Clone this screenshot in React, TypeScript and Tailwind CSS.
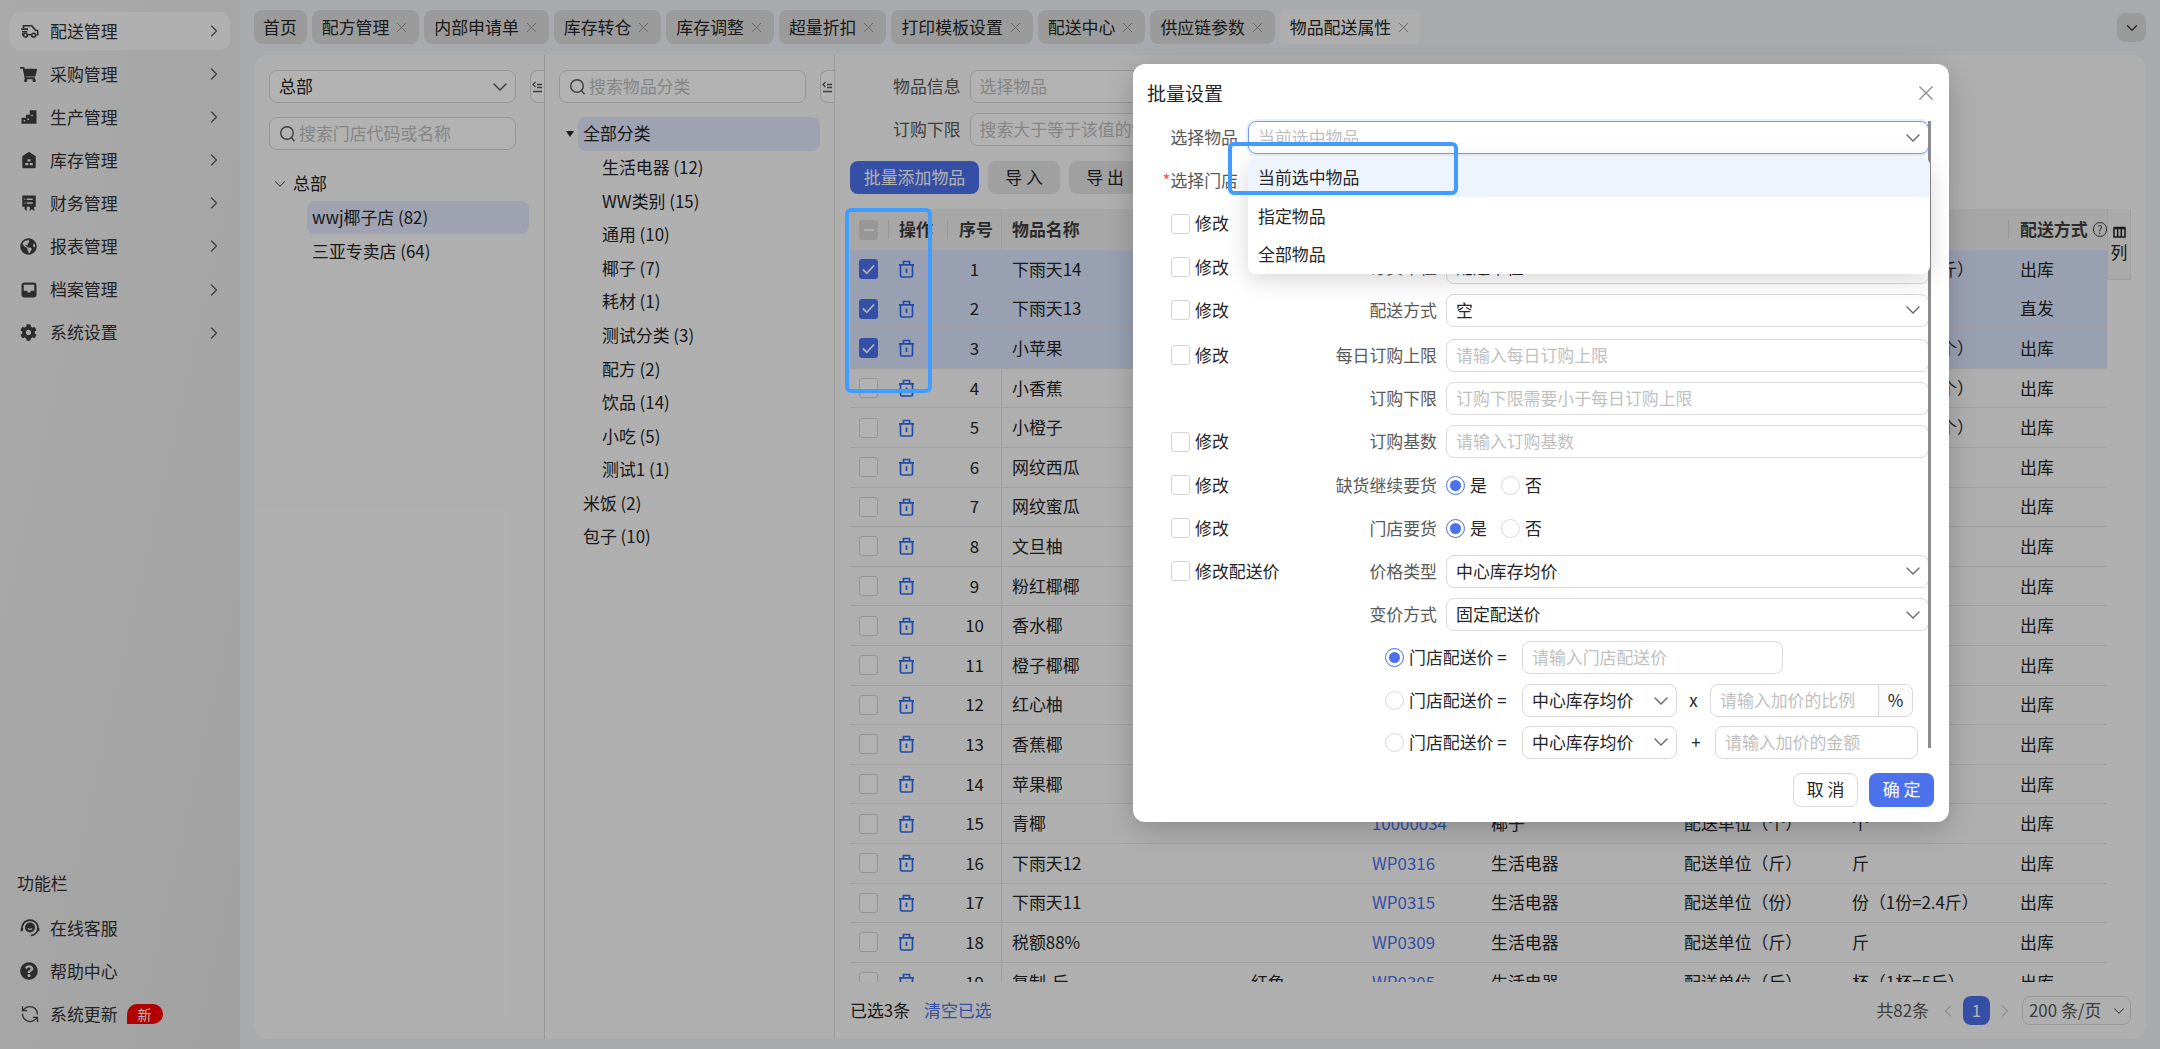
import { ChevronDown, ChevronRight, ChevronLeft, RefreshCcw } from "lucide-react";
import { FaCog, FaGlobeAmericas, FaQuestionCircle, FaShoppingCart } from "react-icons/fa";
import type { ReactNode } from "react";

const TruckIcon = () => (
  <svg width="19" height="18" viewBox="0 0 24 24" fill="none" stroke="currentColor" strokeWidth="2.2">
    <path d="M4 8V5h11l5 6h1.500a1.500 1.500 0 0 1 1.500 1.500V17h-2M15 17H9M4 17H3v-2" />
    <path d="M1 9.500h9M2 13h7" />
    <circle cx="6.500" cy="17.500" r="2.500" />
    <circle cx="17.500" cy="17.500" r="2.500" />
  </svg>
);

const StairsIcon = () => (
  <svg width="18" height="18" viewBox="0 0 24 24" fill="currentColor">
    <path fillRule="evenodd" d="M2 21v-7a1 1 0 0 1 1-1h5V9h5V3h8a1 1 0 0 1 1 1v17H2zm3-5v2h2v-2H5zm5-2v2h2v-2h-2zm5-5v2h2V9h-2z" />
  </svg>
);

const StoreIcon = () => (
  <svg width="18" height="18" viewBox="0 0 24 24" fill="currentColor">
    <path fillRule="evenodd" d="M12 1l9 6v14a2 2 0 0 1-2 2H5a2 2 0 0 1-2-2V7l9-6zm-2 10v3h4v-3h-4zm-3 5v3h4v-3H7zm6 0v3h4v-3h-4z" />
  </svg>
);

const ReceiptIcon = () => (
  <svg width="18" height="18" viewBox="0 0 24 24" fill="currentColor">
    <path fillRule="evenodd" d="M3 2h18v15h-2v6l-3-3-3 3v-6H9v6l-3-3V17H3V2zm6 4v2h8V6H9zm0 5v2h8v-2H9zM6 6v2h1V6H6zm0 5v2h1v-2H6z" />
  </svg>
);

const InboxIcon = () => (
  <svg width="18" height="18" viewBox="0 0 24 24" fill="currentColor">
    <path fillRule="evenodd" d="M6 2h12a4 4 0 0 1 4 4v12a4 4 0 0 1-4 4H6a4 4 0 0 1-4-4V6a4 4 0 0 1 4-4zm-1 3v8h4.500a2.500 2.500 0 0 0 5 0H19V5H5z" />
  </svg>
);

const HeadsetIcon = () => (
  <svg width="20" height="20" viewBox="0 0 24 24" fill="none" stroke="currentColor" strokeWidth="2">
    <path d="M3 15a9.500 9.500 0 1 1 18 0" />
    <path d="M21 15c-1 3-3.500 5.500-8 6" />
    <circle cx="12" cy="11.500" r="6" fill="currentColor" stroke="none" />
    <path d="M9.500 12.500c1.500 1.500 3.500 1.500 5 0" stroke="#ececec" strokeWidth="1.500" />
    <path d="M2 12v4M22 12v4" strokeWidth="2.500" />
  </svg>
);

const TrashIcon = () => (
  <svg width="17" height="18" viewBox="0 0 17 18" fill="none" stroke="#2f6bf0" strokeWidth="1.700">
    <path d="M1 4.800h15M5.500 4.500V1.500h6v3" />
    <path d="M2.500 4.800v10.700a1.500 1.500 0 0 0 1.500 1.500h9a1.500 1.500 0 0 0 1.500-1.500V4.800M8.500 8.500v4.500" />
  </svg>
);

const SmallX = ({ size = 11 }: { size?: number }) => (
  <svg width={size} height={size} viewBox="0 0 11 11" fill="none" stroke="currentColor" strokeWidth="0.900">
    <path d="M1 1l9 9M10 1l-9 9" />
  </svg>
);

const SearchIcon = () => (
  <svg width="17" height="18" viewBox="0 0 17 18" fill="none" stroke="#595959" strokeWidth="1.400" className="shrink-0">
    <circle cx="8" cy="8" r="6.300" />
    <path d="M12.500 12.800l3 3.400" />
  </svg>
);

const CollapseHandle = () => (
  <div className="flex h-[33px] w-[14px] items-center justify-center rounded-l-[8px] border border-r-0 border-[#d9d9d9] bg-white">
    <svg width="11" height="12" viewBox="0 0 11 12" fill="none" stroke="#595959" strokeWidth="1.300">
      <path d="M3.500 1L1 3.500 3.500 6M5 3.500h5M5 6.500h5M1 10.500h9" />
    </svg>
  </div>
);

const Check = ({ state = "off" }: { state?: "off" | "on" | "mixed" }) => {
  if (state === "on") {
    return (
      <span className="flex h-[20px] w-[19px] shrink-0 items-center justify-center rounded-[3px] bg-[#4b72ec]">
        <svg width="13" height="11" viewBox="0 0 13 11" fill="none" stroke="white" strokeWidth="1.800">
          <path d="M1 5.500l3.800 3.800L12 1.500" />
        </svg>
      </span>
    );
  }
  if (state === "mixed") {
    return (
      <span className="flex h-[20px] w-[19px] shrink-0 items-center justify-center rounded-[3px] bg-[#d9d9d9]">
        <span className="h-[2px] w-[10px] bg-white" />
      </span>
    );
  }
  return <span className="h-[20px] w-[19px] shrink-0 rounded-[3px] border-[1.5px] border-[#d4d4d4] bg-white" />;
};

const Radio = ({ on = false }: { on?: boolean }) => (
  <span
    className={
      on
        ? "flex h-[19px] w-[19px] shrink-0 items-center justify-center rounded-full border border-[#4b72ec] bg-white"
        : "h-[19px] w-[19px] shrink-0 rounded-full border border-[#d9d9d9] bg-white"
    }
  >
    {on && <span className="h-[11px] w-[11px] rounded-full bg-[#4b72ec]" />}
  </span>
);

const InputBox = ({ placeholder, className = "" }: { placeholder: string; className?: string }) => (
  <div className={"flex h-[33px] items-center overflow-hidden whitespace-nowrap rounded-[8px] border border-[#d9d9d9] px-[9px] text-[#bfbfbf] " + className}>
    {placeholder}
  </div>
);

const SelectBox = ({ value, className = "" }: { value: string; className?: string }) => (
  <div className={"flex h-[33px] items-center justify-between rounded-[8px] border border-[#d9d9d9] pl-[9px] pr-[3px] text-[#262626] " + className}>
    <span className="whitespace-nowrap">{value}</span>
    <ChevronDown size={24} strokeWidth={1.4} className="shrink-0 text-[#666]" />
  </div>
);

const FormRow = ({ check, label, className = "", children }: { check?: string; label?: string; className?: string; children: ReactNode }) => (
  <div className={"flex h-[33px] items-center " + className}>
    <div className="flex w-[140px] items-center gap-[5px] text-[#262626]">
      {check && <Check />}
      {check && <span className="whitespace-nowrap">{check}</span>}
    </div>
    <div className="flex-1 whitespace-nowrap pr-[9px] text-right text-[#595959]">{label}</div>
    <div className="w-[483px]">{children}</div>
  </div>
);

const YesNo = () => (
  <div className="flex items-center text-[#262626]">
    <Radio on />
    <span className="ml-[5px] w-[31px]">是</span>
    <Radio />
    <span className="ml-[5px]">否</span>
  </div>
);

const menus = [
  { name: "配送管理", icon: <TruckIcon /> },
  { name: "采购管理", icon: <FaShoppingCart size={17} /> },
  { name: "生产管理", icon: <StairsIcon /> },
  { name: "库存管理", icon: <StoreIcon /> },
  { name: "财务管理", icon: <ReceiptIcon /> },
  { name: "报表管理", icon: <FaGlobeAmericas size={17} /> },
  { name: "档案管理", icon: <InboxIcon /> },
  { name: "系统设置", icon: <FaCog size={17} /> },
];

const tabs = ["配方管理", "内部申请单", "库存转仓", "库存调整", "超量折扣", "打印模板设置", "配送中心", "供应链参数"];

const categories = ["生活电器 (12)", "WW类别 (15)", "通用 (10)", "椰子 (7)", "耗材 (1)", "测试分类 (3)", "配方 (2)", "饮品 (14)", "小吃 (5)", "测试1 (1)"];

const rows = [
  { name: "下雨天14", code: "WP0330", cat: "生活电器", unit: "配送单位（斤）", order: "箱（1箱=10斤）", way: "出库" },
  { name: "下雨天13", code: "WP0329", cat: "生活电器", unit: "配送单位（斤）", order: "斤", way: "直发" },
  { name: "小苹果", code: "WP0328", cat: "椰子", unit: "配送单位（个）", order: "箱（1箱=10个）", way: "出库" },
  { name: "小香蕉", code: "WP0327", cat: "椰子", unit: "配送单位（个）", order: "箱（1箱=10个）", way: "出库" },
  { name: "小橙子", code: "WP0326", cat: "椰子", unit: "配送单位（个）", order: "箱（1箱=10个）", way: "出库" },
  { name: "网纹西瓜", code: "10000040", cat: "椰子", unit: "配送单位（个）", order: "个", way: "出库" },
  { name: "网纹蜜瓜", code: "10000039", cat: "椰子", unit: "配送单位（个）", order: "个", way: "出库" },
  { name: "文旦柚", code: "10000038", cat: "椰子", unit: "配送单位（个）", order: "个", way: "出库" },
  { name: "粉红椰椰", code: "10000037", cat: "椰子", unit: "配送单位（个）", order: "个", way: "出库" },
  { name: "香水椰", code: "10000036", cat: "椰子", unit: "配送单位（个）", order: "个", way: "出库" },
  { name: "橙子椰椰", code: "10000035", cat: "椰子", unit: "配送单位（个）", order: "个", way: "出库" },
  { name: "红心柚", code: "10000033", cat: "椰子", unit: "配送单位（个）", order: "个", way: "出库" },
  { name: "香蕉椰", code: "10000032", cat: "椰子", unit: "配送单位（个）", order: "个", way: "出库" },
  { name: "苹果椰", code: "10000031", cat: "椰子", unit: "配送单位（个）", order: "个", way: "出库" },
  { name: "青椰", code: "10000034", cat: "椰子", unit: "配送单位（个）", order: "个", way: "出库" },
  { name: "下雨天12", code: "WP0316", cat: "生活电器", unit: "配送单位（斤）", order: "斤", way: "出库" },
  { name: "下雨天11", code: "WP0315", cat: "生活电器", unit: "配送单位（份）", order: "份（1份=2.4斤）", way: "出库" },
  { name: "税额88%", code: "WP0309", cat: "生活电器", unit: "配送单位（斤）", order: "斤", way: "出库" },
  { name: "复制-斤", color: "红色", code: "WP0305", cat: "生活电器", unit: "配送单位（斤）", order: "杯（1杯=5斤）", way: "出库" },
];

const gridCols = "grid grid-cols-[38px_59px_54px_239px_120px_120px_192px_168px_168px_99px]";

export default function App() {
  return (
    <div className="relative flex h-[1049px] w-[2160px] overflow-hidden bg-[#f1f4f8] font-['Noto_Sans_CJK_SC','Liberation_Sans',sans-serif] text-[16.9px] leading-none text-[#262626]">
      {/* 左侧菜单 */}
      <aside className="flex w-[240px] shrink-0 flex-col justify-between bg-linear-to-br from-[#f4f4f4] to-[#e8e8e8] pb-[25px] pt-[12px]">
        <nav className="flex flex-col gap-[5.1px] px-[10px]">
          {menus.map((m, i) => (
            <div key={m.name} className={(i === 0 ? "bg-[#fcfcfc] " : "") + "flex h-[38px] items-center rounded-[10px] pl-[10px] pr-[6px] text-[#333]"}>
              <span className="flex w-[30px] text-[#404040]">{m.icon}</span>
              <span className="flex-1">{m.name}</span>
              <ChevronRight size={20} strokeWidth={1.4} className="text-[#555]" />
            </div>
          ))}
        </nav>
        <div className="flex flex-col text-[#333]">
          <div className="mb-[26px] pl-[17px]">功能栏</div>
          <div className="flex flex-col gap-[24px] pl-[20px]">
            <div className="flex items-center">
              <span className="w-[30px] text-[#404040]"><HeadsetIcon /></span>
              在线客服
            </div>
            <div className="flex items-center">
              <span className="w-[30px] text-[#404040]"><FaQuestionCircle size={18} /></span>
              帮助中心
            </div>
            <div className="flex items-center">
              <span className="w-[30px] text-[#404040]"><RefreshCcw size={20} strokeWidth={1.5} /></span>
              系统更新
              <span className="ml-[9px] flex h-[20px] w-[36px] items-center justify-center rounded-t-[10px] rounded-br-[10px] bg-[#ff0000] text-[14px] text-white">新</span>
            </div>
          </div>
        </div>
      </aside>

      <main className="flex min-w-0 flex-1 flex-col">
        {/* 页签 */}
        <div className="flex h-[55px] shrink-0 items-start gap-[5px] pl-[14px] pr-[14px] pt-[10px]">
          <div className="flex h-[34px] items-center rounded-[8px] bg-[#dfdfdf] pl-[9px] pr-[10px]">首页</div>
          {tabs.map((t) => (
            <div key={t} className="flex h-[34px] items-center gap-[7px] rounded-[8px] bg-[#dfdfdf] pl-[10px] pr-[12px]">
              {t}
              <span className="text-[#8c8c8c]"><SmallX /></span>
            </div>
          ))}
          <div className="flex h-[34px] items-center gap-[7px] rounded-[8px] bg-[#fafafa] pl-[10px] pr-[12px]">
            物品配送属性
            <span className="text-[#8c8c8c]"><SmallX /></span>
          </div>
          <div className="ml-auto mt-[3px] flex h-[29px] w-[29px] items-center justify-center rounded-[8px] bg-[#dfdfdf]">
            <ChevronDown size={18} strokeWidth={2} className="text-[#404040]" />
          </div>
        </div>

        {/* 内容面板 */}
        <div className="mx-[14px] mb-[10px] flex min-h-0 flex-1 overflow-hidden rounded-[14px] bg-[#fbfbfb]">
          {/* 门店树 */}
          <section className="w-[291px] shrink-0 border-r border-[#dcdcdc] pl-[15px] pt-[15px]">
            <div className="flex items-center justify-between">
              <div className="flex h-[33px] w-[247px] items-center justify-between rounded-[8px] border border-[#d9d9d9] bg-white pl-[9px] pr-[3px]">
                总部
                <ChevronDown size={24} strokeWidth={1.4} className="text-[#555]" />
              </div>
              <CollapseHandle />
            </div>
            <div className="mt-[14px] flex h-[33px] w-[247px] items-center gap-[3px] rounded-[8px] border border-[#d9d9d9] bg-white pl-[9px] text-[#bfbfbf]">
              <SearchIcon />
              搜索门店代码或名称
            </div>
            <div className="mt-[17px] pr-[15px]">
              <div className="flex h-[33.6px] items-center">
                <span className="flex w-[24px] pl-[2px]"><ChevronDown size={18} strokeWidth={1.4} className="text-[#555]" /></span>
                总部
              </div>
              <div className="ml-[38px] flex h-[33.6px] items-center rounded-[8px] bg-[#e4e9fe] pl-[5px]">wwj椰子店 (82)</div>
              <div className="ml-[38px] flex h-[33.6px] items-center pl-[5px]">三亚专卖店 (64)</div>
            </div>
          </section>

          {/* 分类树 */}
          <section className="w-[290px] shrink-0 border-r border-[#dcdcdc] pl-[14px] pt-[15px]">
            <div className="flex items-center justify-between">
              <div className="flex h-[33px] w-[247px] items-center gap-[3px] rounded-[8px] border border-[#d9d9d9] bg-white pl-[9px] text-[#bfbfbf]">
                <SearchIcon />
                搜索物品分类
              </div>
              <CollapseHandle />
            </div>
            <div className="mt-[14px] pr-[14px]">
              <div className="flex h-[33.6px] items-center">
                <span className="flex w-[19px] justify-center pl-[2px]">
                  <span className="h-0 w-0 border-x-[4px] border-t-[6px] border-x-transparent border-t-[#262626]" />
                </span>
                <span className="flex h-[33.6px] flex-1 items-center rounded-[8px] bg-[#e4e9fe] pl-[5px]">全部分类</span>
              </div>
              {categories.map((c) => (
                <div key={c} className="flex h-[33.6px] items-center pl-[43px]">{c}</div>
              ))}
              <div className="flex h-[33.6px] items-center pl-[24px]">米饭 (2)</div>
              <div className="flex h-[33.6px] items-center pl-[24px]">包子 (10)</div>
            </div>
          </section>

          {/* 物品列表 */}
          <section className="flex min-w-0 flex-1 flex-col px-[15px] pt-[15px]">
            <div className="flex h-[33px] items-center gap-[9px] pl-[43px]">
              <span className="text-[#595959]">物品信息</span>
              <InputBox placeholder="选择物品" className="w-[300px] bg-white" />
            </div>
            <div className="mt-[10px] flex h-[33px] items-center gap-[9px] pl-[43px]">
              <span className="text-[#595959]">订购下限</span>
              <InputBox placeholder="搜索大于等于该值的物品" className="w-[300px] bg-white" />
            </div>
            <div className="mt-[15px] flex h-[33px] gap-[9px]">
              <div className="flex w-[129px] items-center justify-center rounded-[8px] bg-[#4b72ec] text-white">批量添加物品</div>
              <div className="flex w-[72px] items-center justify-center rounded-[8px] bg-[#e6e6e6]">导 入</div>
              <div className="flex w-[72px] items-center justify-center rounded-[8px] bg-[#e6e6e6]">导 出</div>
            </div>
            <div className="mt-[15px] flex min-h-0 flex-1 overflow-hidden">
              <div className="w-[1257px] shrink-0">
                <div className={gridCols + " h-[41px] items-center bg-[#efefef] font-bold text-[#404040]"}>
                  <div className="flex items-center pl-[9px]"><Check state="mixed" /></div>
                  <div className="flex h-[19px] items-center border-l border-[#d9d9d9] pl-[10px]">操作</div>
                  <div className="flex h-[19px] items-center border-l border-[#d9d9d9] pl-[11px]">序号</div>
                  <div className="flex h-full items-center border-l border-[#e4e4e4] pl-[10px]">物品名称</div>
                  <div /><div /><div /><div /><div />
                  <div className="flex h-[19px] items-center whitespace-nowrap border-l border-[#d9d9d9] pl-[11px]">
                    配送方式
                    <span className="ml-[5px] flex h-[15px] w-[15px] items-center justify-center rounded-full border border-[#404040] text-[11px] font-normal">?</span>
                  </div>
                </div>
                {rows.map((r, i) => (
                  <div key={r.name} className={(i < 3 ? "bg-[#dce6ff] " : "") + gridCols + " h-[39.6px] items-center border-b border-[#e6e6e6]"}>
                    <div className="flex items-center pl-[9px]"><Check state={i < 3 ? "on" : "off"} /></div>
                    <div className="flex items-center pl-[10px]"><TrashIcon /></div>
                    <div className="pl-[1px] text-center">{i + 1}</div>
                    <div className="flex h-full items-center border-l border-[#e6e6e6] pl-[10px]">{r.name}</div>
                    <div className="pl-[11px]">{r.color}</div>
                    <div className="pl-[12px] text-[#4b72ec]">{r.code}</div>
                    <div className="pl-[11px]">{r.cat}</div>
                    <div className="pl-[12px]">{r.unit}</div>
                    <div className="whitespace-nowrap pl-[12px]">{r.order}</div>
                    <div className="pl-[12px]">{r.way}</div>
                  </div>
                ))}
              </div>
              <div className="flex h-[71px] flex-1 flex-col items-center border-x border-b border-[#e6e6e6] bg-[#f4f4f4] pt-[17px]">
                <svg width="13" height="12" viewBox="0 0 13 12" fill="none" stroke="#262626" strokeWidth="1.600">
                  <path d="M1 2h11v9H1zM4.700 2v9M8.300 2v9" />
                  <path d="M1 2h11" strokeWidth="2.500" />
                </svg>
                <span className="mt-[6px]">列</span>
              </div>
            </div>
            <div className="flex h-[57px] shrink-0 items-center">
              <span>已选3条</span>
              <span className="ml-[14px] text-[#4b72ec]">清空已选</span>
              <div className="ml-auto flex items-center text-[#595959]">
                <span>共82条</span>
                <ChevronLeft size={20} strokeWidth={1} className="ml-[9px] text-[#999]" />
                <span className="ml-[5px] flex h-[29px] w-[27px] items-center justify-center rounded-[8px] bg-[#4b72ec] text-white">1</span>
                <ChevronRight size={20} strokeWidth={1} className="ml-[5px] text-[#999]" />
                <span className="ml-[7px] flex h-[29px] w-[109px] items-center justify-between rounded-[8px] border border-[#d9d9d9] pl-[6px] pr-[2px]">
                  200 条/页
                  <ChevronDown size={18} strokeWidth={1.4} />
                </span>
              </div>
            </div>
          </section>
        </div>
      </main>

      {/* 遮罩 */}
      <div className="absolute inset-0 bg-black/30" />

      {/* 批量设置弹窗 */}
      <div className="absolute left-[1133px] top-[64px] flex h-[758px] w-[816px] flex-col rounded-[12px] bg-white pl-[38px] pr-[18px] shadow-[0_8px_28px_rgba(0,0,0,0.2)]">
        <div className="flex h-[57px] shrink-0 items-center justify-between pr-[0px]">
          <span className="-ml-[24px] text-[19px] text-[#262626]">批量设置</span>
          <span className="-mr-[3px] text-[#8c8c8c]"><SmallX size={16} /></span>
        </div>

        <div className="flex flex-col gap-[10.2px] pr-[2px]">
          <div className="flex h-[33px] items-center gap-[10px]">
            <span className="flex w-[67px] shrink-0 justify-end whitespace-nowrap text-[#595959]">选择物品</span>
            <div className="flex h-[33px] flex-1 items-center justify-between rounded-[8px] border border-[#7b9af0] pl-[9px] pr-[3px] text-[#bfbfbf] shadow-[0_0_0_2px_rgba(75,114,236,0.12)]">
              当前选中物品
              <ChevronDown size={24} strokeWidth={1.4} className="text-[#666]" />
            </div>
          </div>
          <div className="flex h-[33px] items-center gap-[10px]">
            <span className="flex w-[67px] shrink-0 justify-end whitespace-nowrap text-[#595959]"><span className="text-[#ff4d4f]">*</span>选择门店</span>
            <InputBox placeholder="请选择门店" className="flex-1" />
          </div>
          <FormRow check="修改" label="物品状态"><SelectBox value="空" /></FormRow>
          <FormRow check="修改" label="订货单位"><SelectBox value="配送单位" /></FormRow>
          <FormRow check="修改" label="配送方式"><SelectBox value="空" /></FormRow>
          <FormRow check="修改" label="每日订购上限" className="mt-[2px]"><InputBox placeholder="请输入每日订购上限" /></FormRow>
          <FormRow label="订购下限"><InputBox placeholder="订购下限需要小于每日订购上限" /></FormRow>
          <FormRow check="修改" label="订购基数"><InputBox placeholder="请输入订购基数" /></FormRow>
          <FormRow check="修改" label="缺货继续要货"><YesNo /></FormRow>
          <FormRow check="修改" label="门店要货"><YesNo /></FormRow>
          <FormRow check="修改配送价" label="价格类型"><SelectBox value="中心库存均价" /></FormRow>
          <FormRow label="变价方式"><SelectBox value="固定配送价" /></FormRow>

          <div className="flex h-[33px] items-center pl-[214px]">
            <Radio on />
            <span className="ml-[5px] w-[113px]">门店配送价 =</span>
            <InputBox placeholder="请输入门店配送价" className="w-[261px]" />
          </div>
          <div className="flex h-[33px] items-center pl-[214px]">
            <Radio />
            <span className="ml-[5px] w-[113px]">门店配送价 =</span>
            <SelectBox value="中心库存均价" className="w-[155px]" />
            <span className="w-[33px] text-center">x</span>
            <div className="flex h-[33px] w-[203px] items-center overflow-hidden rounded-[8px] border border-[#d9d9d9] text-[#bfbfbf]">
              <span className="flex-1 pl-[9px]">请输入加价的比例</span>
              <span className="flex h-full w-[34px] items-center justify-center border-l border-[#d9d9d9] bg-[#fafafa] text-[#262626]">%</span>
            </div>
          </div>
          <div className="-mt-[2px] flex h-[33px] items-center pl-[214px]">
            <Radio />
            <span className="ml-[5px] w-[113px]">门店配送价 =</span>
            <SelectBox value="中心库存均价" className="w-[155px]" />
            <span className="w-[38px] text-center">+</span>
            <InputBox placeholder="请输入加价的金额" className="w-[203px]" />
          </div>
        </div>

        <div className="-mr-[3px] mt-[14px] flex justify-end gap-[11px]">
          <div className="flex h-[34px] w-[65px] items-center justify-center rounded-[8px] border border-[#d9d9d9]">取 消</div>
          <div className="flex h-[34px] w-[65px] items-center justify-center rounded-[8px] bg-[#4b72ec] text-white">确 定</div>
        </div>

        {/* 滚动条 */}
        <div className="absolute right-[18px] top-[57px] h-[627px] w-[3px] bg-[#8c8c8c]" />

        {/* 下拉菜单 */}
        <div className="absolute left-[115px] top-[94px] w-[682px] overflow-hidden rounded-[8px] bg-white pb-[1px] shadow-[0_6px_24px_rgba(0,0,0,0.16)]">
          <div className="flex h-[39px] items-center bg-[#edf4fe] pl-[10px]">当前选中物品</div>
          <div className="flex h-[38px] items-center pl-[10px]">指定物品</div>
          <div className="flex h-[38px] items-center pl-[10px]">全部物品</div>
        </div>
      </div>

      {/* 标注框 */}
      <div className="absolute left-[845px] top-[208px] h-[185px] w-[87px] rounded-[6px] border-[4px] border-[#409cff]" />
      <div className="absolute left-[1228px] top-[142px] h-[53px] w-[230px] rounded-[6px] border-[4px] border-[#409cff]" />
    </div>
  );
}
